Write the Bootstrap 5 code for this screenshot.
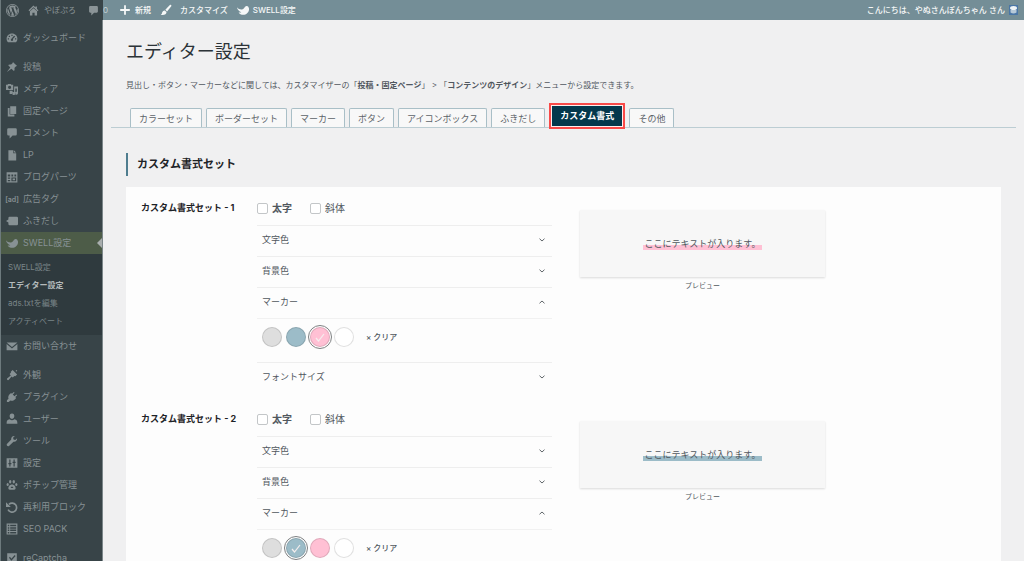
<!DOCTYPE html>
<html lang="ja">
<head>
<meta charset="utf-8">
<meta name="viewport" content="width=device-width, initial-scale=1">
<title>エディター設定</title>
<link href="https://cdn.jsdelivr.net/npm/bootstrap@5.3.0/dist/css/bootstrap.min.css" rel="stylesheet">
<style>
body{font-family:Inter,"Noto Sans CJK JP",sans-serif;font-size:9px;line-height:12px;color:#50575e;background:#f0f0f1}
a{color:inherit;text-decoration:none}
button{font:inherit;color:inherit}
.ico{width:12px;height:12px;fill:currentColor;flex:none}
/* admin bar */
.topbar{height:20px;background:#748e97;color:#f6f8f8;font-size:8px;font-weight:500}
.topbar-site{width:103px;background:#384448;color:#8b9497;font-weight:400;padding-left:5px;border-left:1px solid #6d7a7d}
.topbar-site .ico{width:11px;height:11px}
.topbar-site .wp{width:13px;height:13px}
.site-name{gap:5px;margin-left:9px}
.bar-count{color:#c3cfd3;font-weight:400}
.bar-links{gap:9px;margin-left:11px}
.bar-user{margin-right:6px}
.avatar{width:9px;height:10px}
/* side menu */
.side{width:103px;background:#384448;color:#879194;border-left:1px solid #6d7a7d;border-right:1px solid #7b8689;padding-top:7px}
.side-item{height:22px;padding-left:5px;gap:5px;white-space:nowrap}
.side-gap{margin-top:7px}
.side-on{background:#4d5c48;position:relative}
.side-on::after{content:"";position:absolute;right:0;top:6px;border:5px solid transparent;border-right-color:#a9aeae;border-left:0}
.side-sub{background:#2f3a3e;padding:4px 0 5px 7px;font-size:8px;line-height:18px;color:#7a8588}
.side-sub .now{color:#b4babc;font-weight:700}
/* page */
.page{padding:0 8px}
.inset{margin:0 15px}
.page h1{font-size:18px;line-height:24px;font-weight:400;color:#2c3338;margin-top:20px;margin-bottom:0}
.intro{font-size:8px;margin-top:15px;margin-bottom:0;white-space:nowrap}
.tabs{border-bottom:1px solid #bccdd3;margin-top:13px;padding-left:19px;gap:4px;height:24px}
.tab{border:1px solid #a9bfc7;border-bottom:0;border-radius:2px 2px 0 0;background:#f8f8f8;height:19px;padding:0 8px;line-height:19px;color:#5c6368}
.tab-on{background:#04384c;color:#fff;font-weight:700;height:20px;border:0;border-radius:0;line-height:20px;outline:2px solid #f94a48;outline-offset:1px;box-shadow:0 0 0 1px #fdeeee;margin:0 3px 1px 3px}
.page h2{font-size:11px;line-height:23px;font-weight:700;color:#1d2327;border-left:2px solid #4f7d8f;padding-left:9px;margin-top:25px;margin-bottom:11px}
.panel{background:#fdfdfd;padding:14px 16px 0 15px}
.set{padding-bottom:20px}
.set-name{width:116px;font-size:9px;line-height:14px;font-weight:700;color:#1d2327;margin:0;white-space:nowrap}
.set-body{flex:0 1 295px}
.set-look{flex:0 1 245px;margin-left:28px;padding-top:9px}
.style-checks{font-size:10px;height:14px;margin-bottom:10px;gap:18px}
.style-checks .form-check-input{width:11px;height:11px;margin:0;border:1px solid #c3c6c8;border-radius:2px;float:none}
.acc{border:0;border-top:1px solid #eeeeee;background:none;height:31px;padding:0 6px 2px 5px;width:100%}
.acc svg{width:8px;height:8px;fill:none;stroke:#60666a;stroke-width:1}
.acc-last{height:30px}
.swatches{border-top:1px solid #f1f1f1;height:44px;padding:0 0 7px 5px;gap:4px}
.swatch{appearance:none;width:20px;height:20px;border-radius:50%;border:1px solid rgba(0,0,0,.12);margin:0}
.swatch:checked{outline:1px solid #7d8082;outline-offset:1px;background-image:url("data:image/svg+xml,%3Csvg xmlns='http://www.w3.org/2000/svg' viewBox='0 0 18 18' fill='none' stroke='%23f4eeee' stroke-width='1.2'%3E%3Cpath d='M5 10l2.5 3L13 6'/%3E%3C/svg%3E")}
.sw-gray{background-color:#dedede}.sw-blue{background-color:#9cbcc8}.sw-pink{background-color:#ffc0d4}.sw-white{background-color:#fff}
.clear{border:0;background:none;font-size:8px;font-weight:500;padding:0;margin-left:8px;gap:2px}
.look-box{background:#f7f7f7;height:67px;box-shadow:0 1px 2px rgba(0,0,0,.14)}
.hl{padding:0 2px;line-height:13px}
.hl-pink{background:linear-gradient(transparent 64%,#ffc0d4 64%)}
.hl-blue{background:linear-gradient(transparent 64%,#9cbcc8 64%)}
.look-cap{font-size:7px;margin-top:3px}
</style>
</head>
<body>
<svg class="d-none" xmlns="http://www.w3.org/2000/svg">
<symbol id="i-wp" viewBox="0 0 20 20"><path fill-rule="evenodd" d="M10 0a10 10 0 100 20 10 10 0 000-20zm0 1.2a8.800 8.800 0 110 17.600 8.800 8.800 0 010-17.600z"/><path d="M2.900 6.700l3.900 10.600A8 8 0 012.900 6.700zM4 5.200A8 8 0 0115.300 4c-1.300.6-1.200 2 .1 3.900.9 1.500.5 3-.1 4.800l-.9 2.400L11.300 6l1-.2v-.6H7.200v.6l1.100.2 1.300 3.500-1.800 5.300L4.800 6l1-.2v-.6zM10.100 10.600l2.400 6.900a8 8 0 01-4.700.1zM17.100 6.300a8 8 0 01-3 10.700l2.300-6.800c.6-1.600.8-2.800.7-3.900z"/></symbol>
<symbol id="i-home" viewBox="0 0 20 20"><path d="M10 1L1 9.700l1.500 1.500L10 4.200l7.500 7 1.500-1.500-2.700-2.600V2.500h-2.800v2zM3.500 11.500V19H8v-5h4v5h4.500v-7.500L10 5.700z"/></symbol>
<symbol id="i-bubble" viewBox="0 0 20 20"><path d="M4 2h12q2 0 2 2v8q0 2-2 2h-5l-5 5v-5H4q-2 0-2-2V4q0-2 2-2z"/></symbol>
<symbol id="i-plus" viewBox="0 0 20 20"><path d="M8.500 2h3v6.500H18v3h-6.500V18h-3v-6.500H2v-3h6.500z"/></symbol>
<symbol id="i-brush" viewBox="0 0 20 20"><path d="M18.500 1.500c1 1 .2 2.400-.4 3.200l-6.300 7.600-2.900-2.600 6.700-7.300c.8-.8 2-1.800 2.900-.9zM8 10.700l2.800 2.600c.2 3.200-3.600 6.200-9.600 4.800 2.200-.6 2-2.400 2.500-4.200.5-1.900 2.400-3.300 4.300-3.200z"/></symbol>
<symbol id="i-swell" viewBox="0 0 20 20"><path d="M0 5.500c2.500 3 6 4.500 9.500 3.300 3-1.200 3-5 6.500-5.600 2.300-.2 3.600 2 4 4.300.6 5.500-4 10.500-9.500 10.500-3.500 0-6.500-1.500-7.800-4 1.500.5 3.300.3 4.600-.4C3.500 12.500.6 9.500 0 5.500z"/></symbol>
<symbol id="i-dash" viewBox="0 0 20 20"><path fill-rule="evenodd" d="M10 2.500c-5 0-9 3.900-9 8.700 0 2.300.8 4.300 2.300 5.800h13.400a8.300 8.300 0 002.300-5.800c0-4.800-4-8.700-9-8.700zM9 4.500h2v2H9zM4.600 6.200h2v2h-2zM13.400 6.200l2 1.200-4 4.400c1 1.200.4 3.200-1.400 3.200s-2.600-2-1.300-3.200zM3 10.500h2v2H3zM15 10.500h2v2h-2z"/></symbol>
<symbol id="i-pin" viewBox="0 0 20 20"><path d="M11.500 1.500l7 7-1.800.4-2.700 2.700c.8 2 .2 3.800-.8 5L9 12.900 1.500 18.500l5.600-7.500L3.500 6.800c1.500-1.200 3.200-1.300 5-.8l2.700-2.700z"/></symbol>
<symbol id="i-media" viewBox="0 0 20 20"><path fill-rule="evenodd" d="M0 3h2.500l1-1.500h4.500L9 3h3v8.500H0zm6 1.600a2.600 2.600 0 100 5.200 2.600 2.600 0 000-5.200zM13.500 6H20v11a2.500 2.500 0 11-2-2.400V9h-2.500v8.500a2.500 2.500 0 11-2-2.400zM6 13h5v5.500H6z"/></symbol>
<symbol id="i-pages" viewBox="0 0 20 20"><path d="M7 2h10v13H7zM3 5h3v11h8v3H3z"/></symbol>
<symbol id="i-doc" viewBox="0 0 20 20"><path d="M4 2h8v5h5v12H4zM13 2l4 4h-4z"/></symbol>
<symbol id="i-grid" viewBox="0 0 20 20"><path fill-rule="evenodd" d="M1 2h18v17H1zm2 4v3h4V6zm6 0v3h3V6zm5 0v3h3V6zM3 11v2h4v-2zm0 4v2h4v-2zm6-4v6h8v-6zm2 1.500h4v3h-4z"/></symbol>
<symbol id="i-tag" viewBox="0 0 20 20"><path d="M6 3h12q2 0 2 2v10q0 2-2 2H6q-2 0-2-2v-2.500L0 10l4-2.500V5q0-2 2-2z"/></symbol>
<symbol id="i-mail" viewBox="0 0 20 20"><path d="M1 4h18L10 11.500zM1 6.500l9 7.500 9-7.500V17H1z"/></symbol>
<symbol id="i-look" viewBox="0 0 20 20"><path d="M11 1.500l7.500 7.500-3 3-1.600-.4-2.600 2.400-2-1.600-5 6.100c-1.300 1-3.700-1.200-2.500-2.500L8 10.700 6 8.500l2.200-2.300L8 4.500zM16 3l2-1.500.8.800L17 4.500z"/></symbol>
<symbol id="i-plug" viewBox="0 0 20 20"><path d="M13 1.500l1.300 1.300-3.100 3.100 3 3 3.100-3.100 1.300 1.300-3.100 3.100 1.300 1.300c-2.600 4-6 5.700-9.500 4.200L4.500 18.500H1.500v-3l2.700-2.700C2.700 9.500 4.500 5.800 8.500 3.200l1.300 1.300z"/></symbol>
<symbol id="i-user" viewBox="0 0 20 20"><path d="M10 1c5.500 0 5 8.500 0 9-5-.5-5.500-9 0-9zM6 10.500q4 3.200 8 0c4 .5 5 2.500 5 7.500H1c0-5 1-7 5-7.500z"/></symbol>
<symbol id="i-tool" viewBox="0 0 20 20"><path d="M18.500 5.500c.5 3.500-2.500 6.500-6 5.800L5 18.500c-2 1.500-5-1.500-3.500-3.500L8.700 7.700C8 4 11 1 14.700 1.600L11.800 4.500l.7 3 3 .7z"/></symbol>
<symbol id="i-set" viewBox="0 0 20 20"><path fill-rule="evenodd" d="M1 2h18v16H1zm4.500 2v6H4v2h1.500v4h2v-4H9v-2H7.500V4zm7 0v4H11v2h1.500v6h2v-6H16V8h-1.500V4z"/></symbol>
<symbol id="i-paw" viewBox="0 0 20 20"><path fill-rule="evenodd" d="M10 9c4 0 6.500 4 6 7-.6 2.500-3 2-6 2s-5.400.5-6-2c-.5-3 2-7 6-7zm0 3l-2.500 3h5z"/><ellipse cx="7" cy="4.500" rx="2" ry="2.800"/><ellipse cx="13" cy="4.500" rx="2" ry="2.800"/><ellipse cx="2.800" cy="9" rx="1.800" ry="2.500"/><ellipse cx="17.200" cy="9" rx="1.800" ry="2.500"/></symbol>
<symbol id="i-redo" viewBox="0 0 20 20"><path d="M5 5.500a7.500 7.500 0 11-1.500 9" fill="none" stroke="currentColor" stroke-width="2.800"/><path d="M0 2v8h8z"/></symbol>
<symbol id="i-list" viewBox="0 0 20 20"><path fill-rule="evenodd" d="M1 1h18v18H1zm2 2v2.500h2.500V3zm4 0v2.500h10V3zM3 7v2.500h2.500V7zm4 0v2.500h10V7zm-4 4v2.500h2.500V11zm4 0v2.500h10V11zm-4 4v2.500h2.500V15zm4 0v2.500h10V15z"/></symbol>
<symbol id="i-check" viewBox="0 0 20 20"><path fill-rule="evenodd" d="M2 2h16v16H2zm3 7.500l4 5 7-8L14.500 5 9 11.200 6.500 8z"/></symbol>
<symbol id="i-down" viewBox="0 0 8 8"><path d="M1.500 2.700L4 5l2.500-2.300"/></symbol>
<symbol id="i-up" viewBox="0 0 8 8"><path d="M1.500 5.300L4 3l2.500 2.300"/></symbol>
</svg>

<div class="vh-100 d-flex flex-column overflow-hidden">
<header class="topbar d-flex align-items-center flex-shrink-0 text-nowrap">
  <div class="topbar-site d-flex align-items-center h-100">
    <a href="#" aria-label="WordPress" class="d-flex"><svg class="ico wp"><use href="#i-wp"/></svg></a>
    <a href="#" class="site-name d-flex align-items-center"><svg class="ico"><use href="#i-home"/></svg>やぼぷろ</a>
    <a href="#" class="d-flex ms-auto me-1" aria-label="コメント"><svg class="ico"><use href="#i-bubble"/></svg></a>
  </div>
  <span class="bar-count">0</span>
  <div class="bar-links d-flex align-items-center">
    <a href="#" class="d-flex align-items-center gap-1"><svg class="ico"><use href="#i-plus"/></svg>新規</a>
    <a href="#" class="d-flex align-items-center gap-2"><svg class="ico"><use href="#i-brush"/></svg>カスタマイズ</a>
    <a href="#" class="d-flex align-items-center gap-1"><svg class="ico"><use href="#i-swell"/></svg>SWELL設定</a>
  </div>
  <a href="#" class="bar-user d-flex align-items-center gap-1 ms-auto">こんにちは、やぬさんぽんちゃん さん
    <svg class="avatar" viewBox="0 0 9 10"><path fill="#4a76a6" d="M0 0h9v10H0z"/><ellipse cx="4.500" cy="3" rx="3.500" ry="2" fill="#eef3f6"/><path fill="#b7c9d8" d="M1.500 5h6v2.500q-3 2-6 0z"/></svg></a>
</header>

<div class="d-flex flex-grow-1 overflow-hidden">
<nav class="side flex-shrink-0 overflow-hidden">
  <a href="#" class="side-item d-flex align-items-center"><svg class="ico"><use href="#i-dash"/></svg>ダッシュボード</a>
  <a href="#" class="side-item side-gap d-flex align-items-center"><svg class="ico"><use href="#i-pin"/></svg>投稿</a>
  <a href="#" class="side-item d-flex align-items-center"><svg class="ico"><use href="#i-media"/></svg>メディア</a>
  <a href="#" class="side-item d-flex align-items-center"><svg class="ico"><use href="#i-pages"/></svg>固定ページ</a>
  <a href="#" class="side-item d-flex align-items-center"><svg class="ico"><use href="#i-bubble"/></svg>コメント</a>
  <a href="#" class="side-item d-flex align-items-center"><svg class="ico"><use href="#i-doc"/></svg>LP</a>
  <a href="#" class="side-item d-flex align-items-center"><svg class="ico"><use href="#i-grid"/></svg>ブログパーツ</a>
  <a href="#" class="side-item d-flex align-items-center"><svg class="ico overflow-visible" viewBox="0 0 12 12"><text x="6" y="9" text-anchor="middle" font-size="7" font-weight="600">[ad]</text></svg>広告タグ</a>
  <a href="#" class="side-item d-flex align-items-center"><svg class="ico"><use href="#i-tag"/></svg>ふきだし</a>
  <a href="#" class="side-item side-on d-flex align-items-center"><svg class="ico"><use href="#i-swell"/></svg>SWELL設定</a>
  <div class="side-sub d-flex flex-column text-nowrap">
    <a href="#">SWELL設定</a>
    <a href="#" class="now">エディター設定</a>
    <a href="#">ads.txtを編集</a>
    <a href="#">アクティベート</a>
  </div>
  <a href="#" class="side-item d-flex align-items-center"><svg class="ico"><use href="#i-mail"/></svg>お問い合わせ</a>
  <a href="#" class="side-item side-gap d-flex align-items-center"><svg class="ico"><use href="#i-look"/></svg>外観</a>
  <a href="#" class="side-item d-flex align-items-center"><svg class="ico"><use href="#i-plug"/></svg>プラグイン</a>
  <a href="#" class="side-item d-flex align-items-center"><svg class="ico"><use href="#i-user"/></svg>ユーザー</a>
  <a href="#" class="side-item d-flex align-items-center"><svg class="ico"><use href="#i-tool"/></svg>ツール</a>
  <a href="#" class="side-item d-flex align-items-center"><svg class="ico"><use href="#i-set"/></svg>設定</a>
  <a href="#" class="side-item d-flex align-items-center"><svg class="ico"><use href="#i-paw"/></svg>ポチップ管理</a>
  <a href="#" class="side-item d-flex align-items-center"><svg class="ico"><use href="#i-redo"/></svg>再利用ブロック</a>
  <a href="#" class="side-item d-flex align-items-center"><svg class="ico"><use href="#i-list"/></svg>SEO PACK</a>
  <a href="#" class="side-item side-gap d-flex align-items-center"><svg class="ico"><use href="#i-check"/></svg>reCaptcha</a>
</nav>

<main class="page flex-grow-1 overflow-hidden">
  <div class="inset">
    <h1>エディター設定</h1>
    <p class="intro">見出し・ボタン・マーカーなどに関しては、カスタマイザーの「<b>投稿・固定ページ</b>」 &gt; 「<b>コンテンツのデザイン</b>」メニューから設定できます。</p>
  </div>
  <div class="tabs d-flex align-items-end text-nowrap">
    <a href="#" class="tab">カラーセット</a>
    <a href="#" class="tab">ボーダーセット</a>
    <a href="#" class="tab">マーカー</a>
    <a href="#" class="tab">ボタン</a>
    <a href="#" class="tab">アイコンボックス</a>
    <a href="#" class="tab">ふきだし</a>
    <a href="#" class="tab tab-on">カスタム書式</a>
    <a href="#" class="tab">その他</a>
  </div>
  <div class="inset">
    <h2>カスタム書式セット</h2>
    <div class="panel">
      <section class="set d-flex align-items-start">
        <h3 class="set-name flex-shrink-0">カスタム書式セット - 1</h3>
        <div class="set-body">
          <div class="style-checks d-flex align-items-center">
            <div class="d-flex align-items-center gap-1"><input class="form-check-input" type="checkbox" id="b1"><label for="b1" class="fw-bold">太字</label></div>
            <div class="d-flex align-items-center gap-1"><input class="form-check-input" type="checkbox" id="t1"><label for="t1">斜体</label></div>
          </div>
          <button type="button" class="acc d-flex align-items-center justify-content-between">文字色<svg><use href="#i-down"/></svg></button>
          <button type="button" class="acc d-flex align-items-center justify-content-between">背景色<svg><use href="#i-down"/></svg></button>
          <button type="button" class="acc d-flex align-items-center justify-content-between">マーカー<svg><use href="#i-up"/></svg></button>
          <div class="swatches d-flex align-items-center">
            <input type="radio" name="m1" class="swatch sw-gray" aria-label="グレー">
            <input type="radio" name="m1" class="swatch sw-blue" aria-label="ブルー">
            <input type="radio" name="m1" class="swatch sw-pink" aria-label="ピンク" checked>
            <input type="radio" name="m1" class="swatch sw-white" aria-label="ホワイト">
            <button type="button" class="clear d-flex"><span>×</span>クリア</button>
          </div>
          <button type="button" class="acc acc-last d-flex align-items-center justify-content-between">フォントサイズ<svg><use href="#i-down"/></svg></button>
        </div>
        <div class="set-look text-center">
          <div class="look-box d-flex align-items-center justify-content-center"><span class="hl hl-pink">ここにテキストが入ります。</span></div>
          <div class="look-cap">プレビュー</div>
        </div>
      </section>
      <section class="set d-flex align-items-start">
        <h3 class="set-name flex-shrink-0">カスタム書式セット - 2</h3>
        <div class="set-body">
          <div class="style-checks d-flex align-items-center">
            <div class="d-flex align-items-center gap-1"><input class="form-check-input" type="checkbox" id="b2"><label for="b2" class="fw-bold">太字</label></div>
            <div class="d-flex align-items-center gap-1"><input class="form-check-input" type="checkbox" id="t2"><label for="t2">斜体</label></div>
          </div>
          <button type="button" class="acc d-flex align-items-center justify-content-between">文字色<svg><use href="#i-down"/></svg></button>
          <button type="button" class="acc d-flex align-items-center justify-content-between">背景色<svg><use href="#i-down"/></svg></button>
          <button type="button" class="acc d-flex align-items-center justify-content-between">マーカー<svg><use href="#i-up"/></svg></button>
          <div class="swatches d-flex align-items-center">
            <input type="radio" name="m2" class="swatch sw-gray" aria-label="グレー">
            <input type="radio" name="m2" class="swatch sw-blue" aria-label="ブルー" checked>
            <input type="radio" name="m2" class="swatch sw-pink" aria-label="ピンク">
            <input type="radio" name="m2" class="swatch sw-white" aria-label="ホワイト">
            <button type="button" class="clear d-flex"><span>×</span>クリア</button>
          </div>
        </div>
        <div class="set-look text-center">
          <div class="look-box d-flex align-items-center justify-content-center"><span class="hl hl-blue">ここにテキストが入ります。</span></div>
          <div class="look-cap">プレビュー</div>
        </div>
      </section>
    </div>
  </div>
</main>
</div>
</div>
<script src="https://cdn.jsdelivr.net/npm/bootstrap@5.3.0/dist/js/bootstrap.bundle.min.js"></script>
</body>
</html>
